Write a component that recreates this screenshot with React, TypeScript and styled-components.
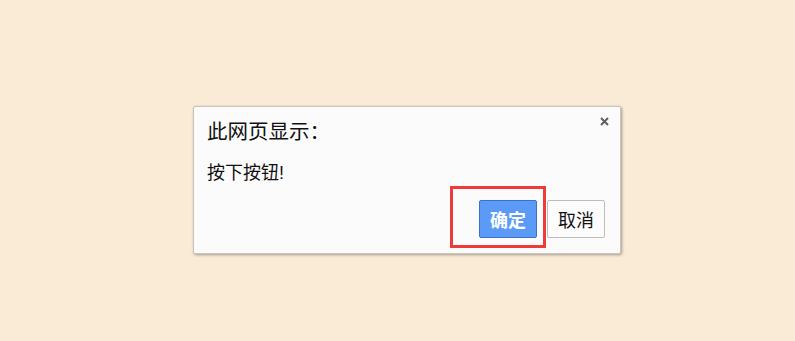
import React from "react";
import styled, { createGlobalStyle } from "styled-components";

const Global = createGlobalStyle`
  html, body { margin: 0; padding: 0; background: #faebd7; }
  body { font-family: "Liberation Sans", "Noto Sans CJK SC", sans-serif; }
`;

const Page = styled.div`
  width: 795px;
  height: 341px;
  background: #faebd7;
  padding: 106px 0 0 193px;
  box-sizing: border-box;
`;

const Dialog = styled.div`
  width: 428px;
  box-sizing: border-box;
  background: #fbfbfb;
  border: 1px solid #c9c4bc;
  border-radius: 2px;
  box-shadow: 1px 1px 3px rgba(0, 0, 0, 0.35);
  padding: 10px 15px 15px 13px;
  display: flex;
  flex-direction: column;
`;

const Header = styled.div`
  display: flex;
  justify-content: space-between;
  align-items: flex-start;
`;

const Title = styled.div`
  font-size: 20.5px;
  line-height: 26px;
  color: #111;
  margin-top: 2px;
`;

const Close = styled.button`
  border: none;
  background: transparent;
  padding: 0;
  margin: 0 -6px 0 0;
  width: 14px;
  height: 9px;
  display: flex;
  align-items: center;
  justify-content: center;
  cursor: pointer;
`;

const Message = styled.div`
  font-size: 18px;
  line-height: 22px;
  color: #111;
  margin-top: 17px;
`;

const Actions = styled.div`
  display: flex;
  justify-content: flex-end;
  gap: 10px;
  margin-top: 16px;
`;

const Highlight = styled.div`
  position: relative;
  display: flex;
  &::after {
    content: "";
    position: absolute;
    left: -29px;
    right: -9px;
    top: -14px;
    bottom: -10px;
    border: 3px solid #f03a3a;
    pointer-events: none;
  }
`;

const Button = styled.button<{ $primary?: boolean }>`
  width: 58px;
  height: 38px;
  box-sizing: border-box;
  border-radius: 2px;
  font-family: "Liberation Sans", "Noto Sans CJK SC", sans-serif;
  font-size: 18px;
  padding: 0;
  cursor: pointer;
  border: 1px solid ${(p) => (p.$primary ? "#3b6fc9" : "#bdbdbd")};
  background: ${(p) => (p.$primary ? "#5b9bf7" : "#fcfcfc")};
  color: ${(p) => (p.$primary ? "#ffffff" : "#111")};
  font-weight: ${(p) => (p.$primary ? 700 : 400)};
`;

export default function App() {
  return (
    <>
      <Global />
      <Page>
        <Dialog>
          <Header>
            <Title>此网页显示：</Title>
            <Close aria-label="关闭">
              <svg width="9" height="9" viewBox="0 0 9 9">
                <path d="M1 1 L8 8 M8 1 L1 8" stroke="#5f5f5f" strokeWidth="2" />
              </svg>
            </Close>
          </Header>
          <Message>按下按钮!</Message>
          <Actions>
            <Highlight>
              <Button $primary>确定</Button>
            </Highlight>
            <Button>取消</Button>
          </Actions>
        </Dialog>
      </Page>
    </>
  );
}
